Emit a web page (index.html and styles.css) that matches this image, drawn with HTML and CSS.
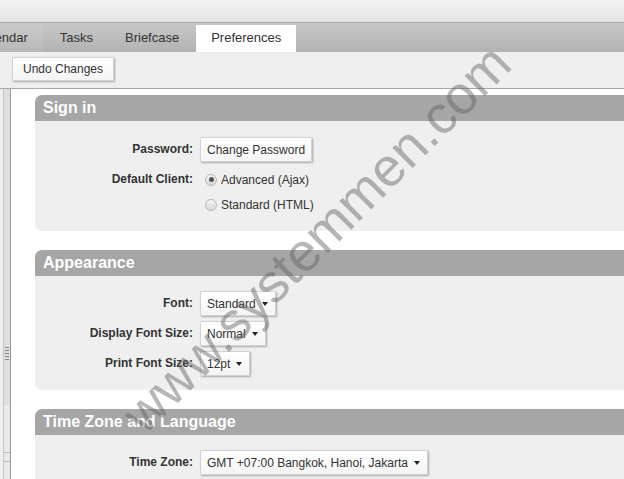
FILE: index.html
```html
<!DOCTYPE html>
<html>
<head>
<meta charset="utf-8">
<link rel="stylesheet" href="styles.css">
</head>
<body>
<div class="app">
  <div class="topband"></div>
  <nav class="tabbar">
    <div class="tab tab-cal">Calendar</div>
    <div class="tab">Tasks</div>
    <div class="tab">Briefcase</div>
    <div class="tab active">Preferences</div>
  </nav>
  <div class="toolbar"><button class="btn btn-undo">Undo Changes</button></div>
  <div class="main">
    <aside class="sidebar">
      <div class="rail">
        <div class="thumb">
          <div class="grip"></div>
        </div>
        <div class="rail-end"></div>
      </div>
    </aside>
    <div class="content">
      <section class="panel">
        <h2 class="panel-head">Sign in</h2>
        <div class="panel-body signin">
          <div class="label">Password:</div>
          <div class="ctl"><button class="btn">Change Password</button></div>
          <div class="label">Default Client:</div>
          <div class="ctl">
            <div class="radio-row"><span class="radio on"></span><span>Advanced (Ajax)</span></div>
            <div class="radio-row"><span class="radio"></span><span>Standard (HTML)</span></div>
          </div>
        </div>
      </section>
      <section class="panel">
        <h2 class="panel-head">Appearance</h2>
        <div class="panel-body">
          <div class="label">Font:</div>
          <div class="ctl"><span class="select">Standard<span class="caret"></span></span></div>
          <div class="label">Display Font Size:</div>
          <div class="ctl"><span class="select">Normal<span class="caret"></span></span></div>
          <div class="label">Print Font Size:</div>
          <div class="ctl"><span class="select">12pt<span class="caret"></span></span></div>
        </div>
      </section>
      <section class="panel">
        <h2 class="panel-head">Time Zone and Language</h2>
        <div class="panel-body">
          <div class="label">Time Zone:</div>
          <div class="ctl"><span class="select">GMT +07:00 Bangkok, Hanoi, Jakarta<span class="caret"></span></span></div>
        </div>
      </section>
    </div>
  </div>
  <div class="watermark">www.systemmen.com</div>
</div>
</body>
</html>
```
FILE: styles.css
```css
html, body {
  margin: 0;
  padding: 0;
  height: 479px;
  overflow: hidden;
  background: #fff;
}
body {
  font-family: "Liberation Sans", Arial, sans-serif;
  color: #333;
}
.app {
  position: relative;
  width: 624px;
  height: 479px;
  overflow: hidden;
}
.topband {
  height: 22px;
  background: linear-gradient(#f3f3f3, #e4e4e4);
  border-bottom: 1px solid #a8a8a8;
}
.tabbar {
  height: 29px;
  display: flex;
  align-items: flex-end;
  gap: 2px;
  background: linear-gradient(#c8c8c8, #b2b2b2);
  font-size: 13px;
}
.tab {
  flex: none;
  height: 27px;
  line-height: 26px;
  padding: 0 15px;
  color: #333;
  white-space: nowrap;
}
.tab-cal {
  margin-left: -40px;
  background: rgba(255, 255, 255, 0.08);
}
.tab.active {
  background: #fff;
}
.toolbar {
  box-sizing: border-box;
  height: 37px;
  background: #efefef;
  border-bottom: 1px solid #a9a9a9;
  padding: 5px 0 0 12px;
}
.btn {
  font-family: "Liberation Sans", Arial, sans-serif;
  font-size: 12px;
  color: #333;
  height: 25px;
  padding: 0 6px;
  margin: 0;
  background: linear-gradient(#fff, #f4f4f4);
  border: 1px solid #d2d2d2;
  border-radius: 1px;
  box-shadow: 1px 1px 2px rgba(0, 0, 0, 0.3);
  display: block;
}
.btn-undo {
  height: 24px;
  width: 102px;
  padding: 0 9px;
}
.main {
  display: flex;
  height: 390px;
}
.sidebar {
  flex: none;
  width: 11px;
  box-sizing: border-box;
  padding-left: 3px;
  background: #eee;
}
.rail {
  height: 100%;
  box-sizing: border-box;
  border-left: 1px solid #c4c4c4;
  border-right: 1px solid #9a9a9a;
  background: #e9e9e9;
  display: flex;
  flex-direction: column;
}
.thumb {
  height: 316px;
  background: #dedede;
  display: flex;
  flex-direction: column;
  align-items: center;
}
.grip {
  margin-top: 258px;
  width: 4px;
  height: 15px;
  background: repeating-linear-gradient(#8a8a8a 0 1px, transparent 1px 3px);
}
.rail-end {
  margin-top: 47px;
  border-top: 1px solid #b8b8b8;
  height: 8px;
  border-bottom: 1px solid #b8b8b8;
}
.content {
  flex: 1;
  min-width: 0;
  padding: 6px 0 0 24px;
}
.panel {
  width: 640px;
  margin-bottom: 19px;
}
.panel-head {
  margin: 0;
  height: 26px;
  line-height: 26px;
  padding-left: 8px;
  font-size: 16px;
  font-weight: bold;
  color: #fff;
  background: #a6a6a6;
  border-top-left-radius: 7px;
}
.panel-body {
  background: #efefef;
  border-bottom-left-radius: 7px;
  padding: 15px 0 14px;
  display: grid;
  grid-template-columns: 158px auto;
  column-gap: 7px;
  row-gap: 5px;
  justify-content: start;
  align-items: start;
}
.signin {
  padding-top: 16px;
}
.label {
  font-weight: bold;
  font-size: 12px;
  line-height: 25px;
  text-align: right;
  white-space: nowrap;
}
.ctl {
  font-size: 12px;
}
.radio-row {
  display: flex;
  align-items: center;
  height: 25px;
  gap: 4px;
  padding-left: 5px;
  white-space: nowrap;
}
.radio {
  width: 12px;
  height: 12px;
  box-sizing: border-box;
  border-radius: 50%;
  border: 1px solid #b7b7b7;
  background: linear-gradient(#f4f4f4, #d8d8d8);
  display: flex;
  align-items: center;
  justify-content: center;
}
.radio.on::after {
  content: "";
  width: 5px;
  height: 5px;
  border-radius: 50%;
  background: #555;
}
.select {
  display: inline-flex;
  align-items: center;
  box-sizing: border-box;
  height: 25px;
  padding: 0 7px 0 6px;
  gap: 6px;
  white-space: nowrap;
  background: linear-gradient(#fff, #f4f4f4);
  border: 1px solid #d2d2d2;
  border-radius: 1px;
  box-shadow: 1px 1px 2px rgba(0, 0, 0, 0.3);
}
.caret {
  width: 0;
  height: 0;
  border-left: 3.5px solid transparent;
  border-right: 3.5px solid transparent;
  border-top: 4px solid #222;
}
.watermark {
  position: absolute;
  left: 316px;
  top: 238px;
  transform: translate(-50%, -50%) rotate(-45deg);
  font-family: "Liberation Sans", Arial, sans-serif;
  font-size: 54px;
  color: rgba(95, 95, 95, 0.45);
  white-space: nowrap;
  pointer-events: none;
}
```
